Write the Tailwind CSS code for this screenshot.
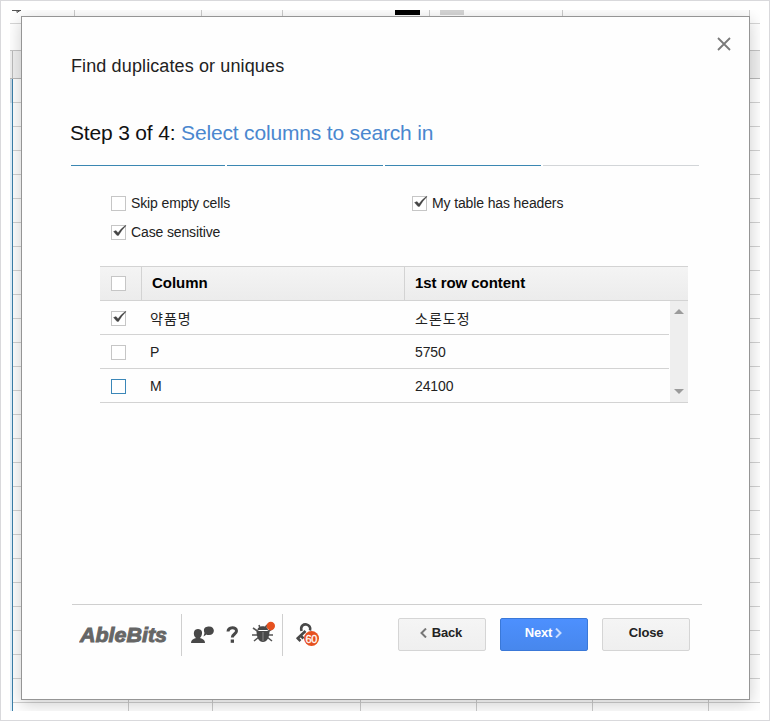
<!DOCTYPE html>
<html lang="en">
<head>
<meta charset="utf-8">
<title>Find duplicates or uniques</title>
<script src="https://cdn.jsdelivr.net/npm/@tailwindcss/browser@4"></script>
</head>
<body class="bg-white font-['Liberation_Sans','Noto_Sans_CJK_KR',sans-serif] text-[#222]">
<div class="relative h-[721px] w-[770px] overflow-hidden border border-[#d9d9dc] p-[9px]">
  <!-- spreadsheet behind the dialog -->
  <div class="relative h-[701px] w-[750px] overflow-hidden bg-white">
    <div class="flex h-[14px] border-b border-[#d6d6d6]">
      <div class="w-[65px] border-r border-[#ccc]"><svg class="block" width="12" height="4"><path d="M2 .5h9M7 0v2.5l3-2" fill="none" stroke="#555"/></svg></div>
      <div class="w-[127px] border-r border-[#ccc]"></div>
      <div class="w-[81px] border-r border-[#ccc]"></div>
      <div class="flex w-[147px] border-r border-[#ccc] pl-[112px]"><div class="h-[5px] w-[25px] bg-black"></div></div>
      <div class="flex w-[133px] border-r border-[#ccc] pl-[10px]"><div class="h-[5px] w-6 bg-[#d6d6d6]"></div></div>
      <div class="w-[187px] border-r border-[#ccc]"></div>
    </div>
    <div class="h-[27px] border-b border-[#c4c4c4]"></div>
    <div class="h-7 border-b border-[#b8b8b8] bg-[#f0f0f0]"><div class="h-full w-[3px] border-r border-[#bbb]"></div></div>
    <div class="flex h-[632px]">
      <div class="h-full w-[3px] border-r border-[#3b7fa8] bg-[#e1f0fb]"><div class="h-6 bg-[#c8d8e4]"></div></div>
      <div class="flex h-full flex-1 bg-[repeating-linear-gradient(to_bottom,transparent_0px,transparent_23px,#d2d2d2_23px,#d2d2d2_24px)]">
        <div class="w-[116px] border-r border-[#ccc]"></div>
        <div class="w-[84px] border-r border-[#ccc]"></div>
        <div class="w-[148px] border-r border-[#ccc]"></div>
        <div class="w-[116px] border-r border-[#ccc]"></div>
        <div class="w-[116px] border-r border-[#ccc]"></div>
        <div class="w-[116px] border-r border-[#ccc]"></div>
      </div>
    </div>
    <!-- dialog -->
    <div class="absolute left-[11px] top-[6px] flex h-[684px] w-[729px] flex-col border border-[#959595] bg-[#fefefe] pl-[48px] shadow-[0_4px_16px_rgba(0,0,0,0.2)]">
      <div class="flex h-[78px] justify-between pr-[18.5px]">
        <h1 class="ml-px mt-[37px] whitespace-nowrap text-[18px] leading-6 tracking-[0.12px]">Find duplicates or uniques</h1>
        <svg class="mt-[19.5px]" width="14" height="14" viewBox="0 0 14 14"><path d="M1 1l12 12M13 1L1 13" stroke="#7a7a7a" stroke-width="1.8"/></svg>
      </div>
      <h2 class="mt-[24px] whitespace-nowrap text-[21px] leading-7 tracking-[-0.17px] text-[#111]">Step 3 of 4: <span class="text-[#4a87cf]">Select columns to search in</span></h2>
      <div class="mt-[18px] flex gap-[2px] pl-px">
        <div class="h-px w-[154px] bg-[#3b87b2]"></div><div class="h-px w-[156px] bg-[#3b87b2]"></div><div class="h-px w-[156px] bg-[#3b87b2]"></div><div class="h-px w-[156px] bg-[#d2d5d8]"></div>
      </div>
      <div class="mt-[23px] grid grid-cols-[301px_1fr] pl-[41px] text-[14px] leading-[29px] tracking-[-0.13px]">
        <label class="flex items-center gap-[5px]"><span class="size-[15px] border border-[#c6c6c6] bg-white"></span><span>Skip empty cells</span></label>
        <label class="flex items-center gap-[5px]"><span class="size-[15px] border border-[#c6c6c6] bg-white"><svg class="block overflow-visible" width="13" height="13"><path d="M1.500 5.500L4 4.500 6 6.800Q9 2.500 13.500-.7L14-.2Q9.500 4 6.500 9.500H5Z" fill="#444" stroke="#444" stroke-width=".3"/></svg></span><span>My table has headers</span></label>
        <label class="flex items-center gap-[5px]"><span class="size-[15px] border border-[#c6c6c6] bg-white"><svg class="block overflow-visible" width="13" height="13"><path d="M1.500 5.500L4 4.500 6 6.800Q9 2.500 13.500-.7L14-.2Q9.500 4 6.500 9.500H5Z" fill="#444" stroke="#444" stroke-width=".3"/></svg></span><span>Case sensitive</span></label>
      </div>
      <div class="ml-[30px] mt-[19px] w-[588px] text-[14px]">
        <div class="flex h-[35px] items-center border-y border-[#d3d3d3] bg-linear-to-b from-[#f4f4f4] to-[#ececec] text-[15px] font-bold tracking-[-0.05px] text-black">
          <div class="flex h-full w-[42px] items-center border-r border-[#d3d3d3] pl-[11px]"><span class="size-[15px] border border-[#c6c6c6] bg-white"></span></div>
          <div class="flex h-full w-[263px] items-center border-r border-[#d3d3d3] pl-[10px]">Column</div>
          <div class="pl-[10px]">1st row content</div>
        </div>
        <div class="flex border-b border-[#d3d3d3]">
          <div class="flex-1 tracking-[-0.1px]">
            <div class="flex h-[34px] items-center border-b border-[#d3d3d3] pl-[11px] pt-[2px]"><span class="size-[15px] border border-[#c6c6c6] bg-white"><svg class="block overflow-visible" width="13" height="13"><path d="M1.500 5.500L4 4.500 6 6.800Q9 2.500 13.500-.7L14-.2Q9.500 4 6.500 9.500H5Z" fill="#444" stroke="#444" stroke-width=".3"/></svg></span><span class="ml-6 w-[265px] pt-px tracking-[1px]">약품명</span><span class="pt-px tracking-[1px]">소론도정</span></div>
            <div class="flex h-[34px] items-center border-b border-[#d3d3d3] pl-[11px] pt-[2px]"><span class="size-[15px] border border-[#c6c6c6] bg-white"></span><span class="ml-6 w-[265px]">P</span><span>5750</span></div>
            <div class="flex h-[33px] items-center pl-[11px] pt-[2px]"><span class="size-[15px] border border-[#3b87b8] bg-white"></span><span class="ml-6 w-[265px]">M</span><span>24100</span></div>
          </div>
          <div class="ml-px flex w-[18px] flex-col items-center justify-between bg-[#eee] pb-2 pt-2">
            <svg width="10" height="5"><path d="M0 5L5 0l5 5z" fill="#9b9b9b"/></svg>
            <svg width="10" height="5"><path d="M0 0h10L5 5z" fill="#9b9b9b"/></svg>
          </div>
        </div>
      </div>
      <div class="ml-[2px] mt-[201px] flex h-[56px] w-[630px] items-start border-t border-[#cfcfcf] pt-[9px]">
        <div class="flex h-[42px] w-[110px] items-center border-r border-[#cfcfcf] pl-[7px]">
          <svg width="92" height="24" viewBox="0 0 92 24"><text x="1" y="18.500" font-family="Liberation Sans" font-size="20" font-weight="bold" font-style="italic" textLength="87" lengthAdjust="spacingAndGlyphs" fill="#666" stroke="#666" stroke-width=".9">AbleBits</text></svg>
        </div>
        <div class="flex h-[42px] w-[101px] items-center border-r border-[#cfcfcf] pl-[9px]">
          <svg width="24" height="18" viewBox="0 0 24 18"><path d="M0 17c0-3 2-4 5-5-2-1.500-2.500-4-2-6 .5-4 7.500-4 8 0 .3 2-.5 4.500-2 6 3 1 5 2 5 5z" fill="#484848"/><path d="M12.500 10.500l1-3.500C11.500 2 15 .5 18 .5c6.500 0 6.500 8.500 0 8.500-1.500 0-2 0-2.500-.5z" fill="#484848"/></svg>
          <svg class="ml-[11px]" width="13" height="18" viewBox="0 0 13 18"><path d="M2 5.500c.3-5 8.500-5 8.500-.5 0 3-4.200 3-4.200 6.500" fill="none" stroke="#484848" stroke-width="3"/><path d="M4.700 13.500h3.300v3.300H4.700z" fill="#484848"/></svg>
          <svg class="ml-[13px] mt-[-4px]" width="24" height="24" viewBox="0 0 24 24"><g fill="none" stroke="#555" stroke-width="1.600"><path d="M7 11L1 7M6 14H0M7 16l-5 4M15 11l5-3M16 14h5M15 16l5 4M8 7L7 4M13 7l2-3"/></g><path d="M5.500 9C5.500 4 16 4 16 9zM4.500 10h13c0 6.500-2.500 11-6.500 11S4.500 16.500 4.500 10z" fill="#484848"/><path d="M11 11v9" stroke="#888"/><circle cx="18.800" cy="5" r="4.200" fill="#e6511f"/></svg>
        </div>
        <svg class="ml-3 mt-[8px]" width="25" height="25" viewBox="0 0 25 25"><path d="M6.500 9C5 3.500 9 2 11.500 2.500s4.500 3 3.500 6M10.500 9l-8.500 8M5.500 13.500l3 3M2 15.500l3.500 3.500" fill="none" stroke="#484848" stroke-width="2.600"/><circle cx="16.500" cy="16.500" r="7.500" fill="#e6511f"/><text x="16.300" y="20.500" text-anchor="middle" font-size="11" font-family="Liberation Sans" letter-spacing="-.4" fill="white" stroke="white" stroke-width=".3">60</text></svg>
        <div class="ml-auto mr-[12px] mt-1 flex gap-[14px] text-[13px] font-bold tracking-[-0.2px]">
          <div class="flex h-[33px] w-[88px] items-center justify-center gap-[5px] rounded-[2px] border border-[#d5d5d5] bg-linear-to-b from-[#f5f5f5] to-[#efefef] pb-[3px] pr-[2px]"><svg width="7" height="10"><path d="M6 .5L1.500 5 6 9.500" fill="none" stroke="#777" stroke-width="2"/></svg>Back</div>
          <div class="flex h-[33px] w-[88px] items-center justify-center gap-[3px] rounded-[2px] border border-[#3a78d8] bg-linear-to-b from-[#4d90fe] to-[#4787ed] pb-[3px] pr-px text-white">Next<svg width="7" height="10"><path d="M1 .5L5.500 5 1 9.500" fill="none" stroke="#c8dcff" stroke-width="2"/></svg></div>
          <div class="flex h-[33px] w-[88px] items-center justify-center rounded-[2px] border border-[#d5d5d5] bg-linear-to-b from-[#f5f5f5] to-[#efefef] pb-[3px]">Close</div>
        </div>
      </div>
    </div>
  </div>
</div>
</body>
</html>
